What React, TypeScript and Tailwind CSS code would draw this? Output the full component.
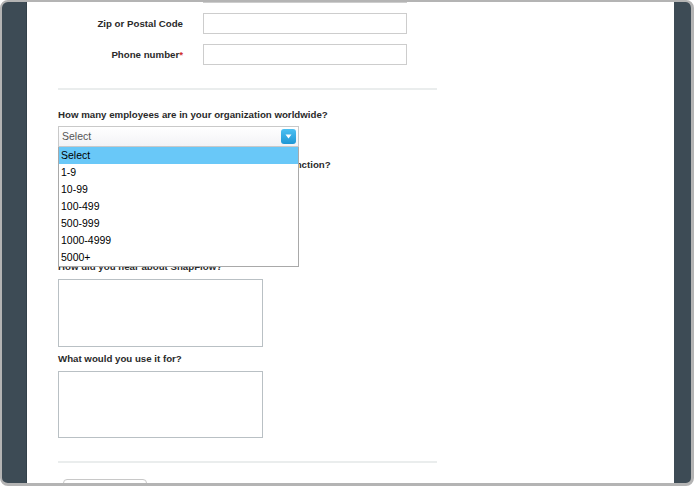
import React from 'react';

const labelCls = "font-['Liberation_Sans',Arial,sans-serif] font-bold text-[9.7px] leading-[12px] text-[#2a2a2a]";

const options = ['Select', '1-9', '10-99', '100-499', '500-999', '1000-4999', '5000+'];

const TextInput: React.FC<{ className?: string }> = ({ className = '' }) => (
  <div className={`w-[204px] h-[21px] border border-[#cdcdcd] bg-white ${className}`} />
);

// the closed selects further down sit under the open list, so they carry no text
const SelectBox: React.FC<{ open?: boolean }> = ({ open }) => (
  <div className="relative w-[241px] h-[21px]">
    <div className="h-full border border-[#c9c9c9] bg-gradient-to-b from-white to-[#f3f3f6] flex items-center justify-between pl-[3px] pr-[2px]">
      <span className="font-['Liberation_Sans',Arial,sans-serif] text-[10.5px] text-[#555]">{open ? 'Select' : ''}</span>
      <span className="w-[15px] h-[15px] rounded-[3px] bg-gradient-to-b from-[#4cc0f2] to-[#1d97d5] flex items-center justify-center">
        <svg width="7" height="5" viewBox="0 0 7 5">
          <path d="M0.5 0.5 L6.5 0.5 L3.5 4.5 Z" fill="#fff" />
        </svg>
      </span>
    </div>
    {open && (
      <ul className="absolute left-0 top-[21px] w-[241px] bg-white border-x border-b border-[#a9a9a9] z-10">
        {options.map((o, i) => (
          <li
            key={o}
            className={`h-[17px] flex items-center pl-[2px] font-['Liberation_Sans',Arial,sans-serif] text-[10.5px] text-black ${i === 0 ? 'bg-[#69c8f8]' : ''}`}
          >
            {o}
          </li>
        ))}
      </ul>
    )}
  </div>
);

export default function App() {
  return (
    <div className="w-[694px] h-[486px] bg-white">
      <div className="h-full flex overflow-hidden rounded-[8px] border-t-2 border-l-2 border-r-[3px] border-b-[3px] border-[#b4b4b4] bg-[#3d4b55]">
        <div className="w-[25px] shrink-0 border-r border-[#33414a]" />
        <div className="w-[647px] shrink-0 bg-white pl-[31px] overflow-hidden">
          <div className="pl-[145px] mt-[-20px]">
            <TextInput />
          </div>

          <div className="flex items-center mt-[10px]">
            <div className={`w-[125px] text-right ${labelCls}`}>Zip or Postal Code</div>
            <TextInput className="ml-[20px]" />
          </div>
          <div className="flex items-center mt-[10px]">
            <div className={`w-[125px] text-right ${labelCls}`}>
              Phone number<span className="text-[#d0312d]">*</span>
            </div>
            <TextInput className="ml-[20px]" />
          </div>

          <div className="w-[379px] h-[2px] bg-[#eaeded] mt-[23px]" />

          <div className={`mt-[19px] ${labelCls}`}>How many employees are in your organization worldwide?</div>
          <div className="mt-[5px]">
            <SelectBox open />
          </div>

          <div className={`mt-[12px] pl-[3px] ${labelCls}`}>Which of the following best describes your work function?</div>
          <div className="mt-[5px]">
            <SelectBox />
          </div>

          <div className="mt-[13px] h-[12px]" />
          <div className="mt-[5px]">
            <SelectBox />
          </div>

          <div className={`mt-[13px] ${labelCls}`}>How did you hear about SnapFlow?</div>
          <div className="mt-[6px] w-[205px] h-[68px] border border-[#b9c0c4]" />

          <div className={`mt-[6px] ${labelCls}`}>What would you use it for?</div>
          <div className="mt-[6px] w-[205px] h-[67px] border border-[#b9c0c4]" />

          <div className="w-[379px] h-[2px] bg-[#eaeded] mt-[23px]" />

          <div className="mt-[16px] ml-[5px] w-[84px] h-[24px] rounded-[4px] border border-[#c8c8c8] bg-white" />
        </div>
        <div className="flex-1" />
      </div>
    </div>
  );
}
